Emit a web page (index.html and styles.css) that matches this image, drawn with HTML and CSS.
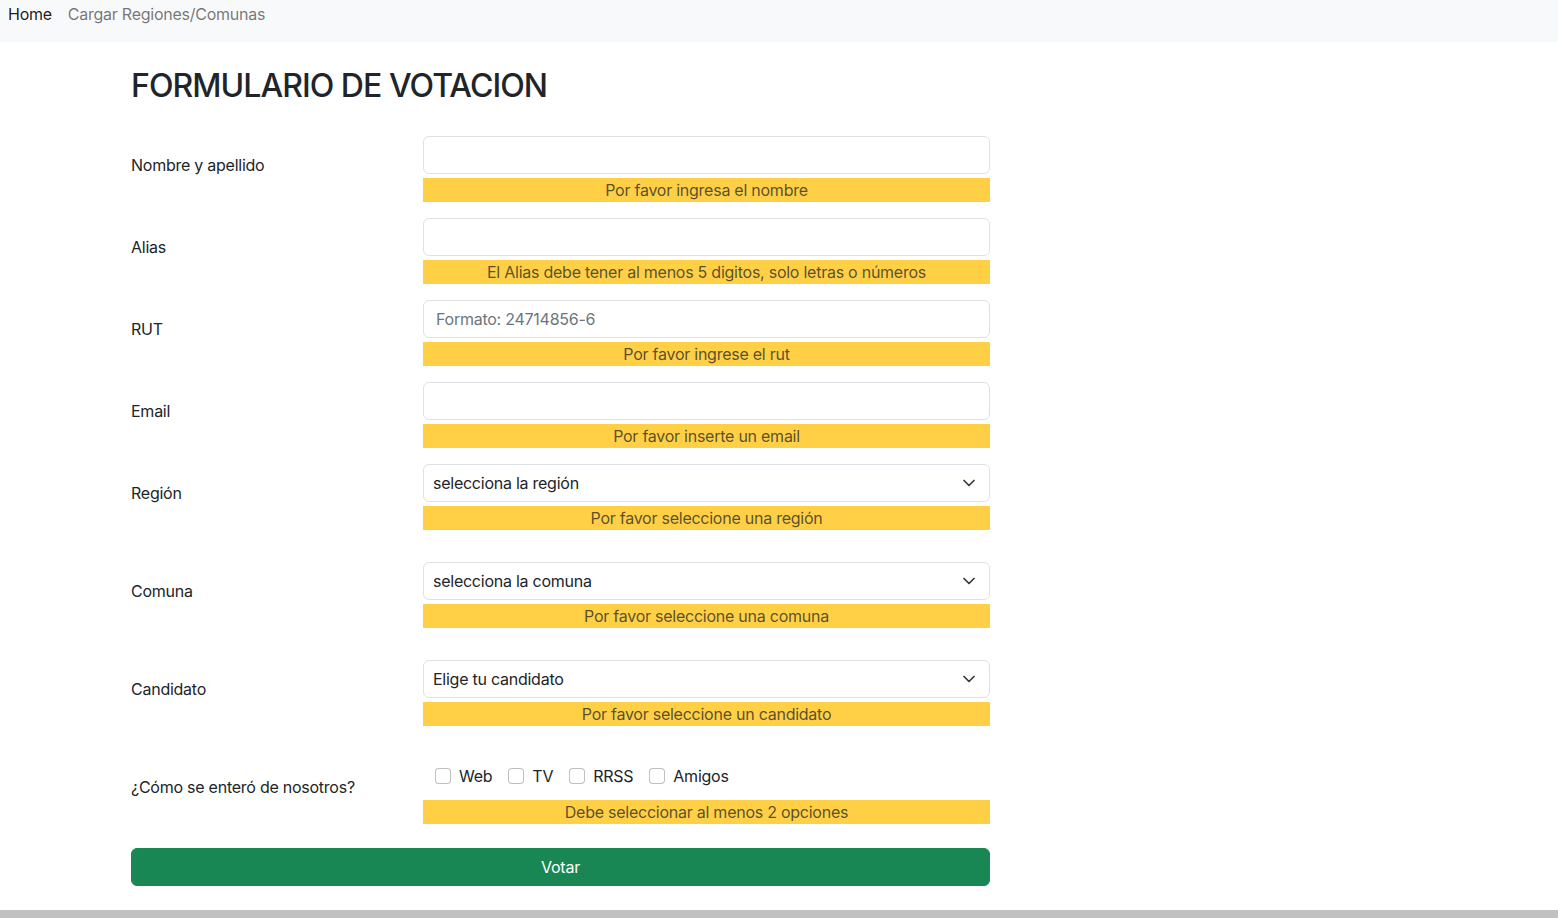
FILE: index.html
```html
<!DOCTYPE html>
<html lang="es">
<head>
<meta charset="utf-8">
<title>Formulario de votación</title>
<link rel="stylesheet" href="styles.css">
</head>
<body>
<nav class="topbar">
  <a class="nav-link active" href="#">Home</a>
  <a class="nav-link" href="#">Cargar Regiones/Comunas</a>
</nav>
<main class="container">
  <h2 class="title">FORMULARIO DE VOTACION</h2>
  <form class="vote-form">
    <div class="field-row">
      <label class="field-label">Nombre y apellido</label>
      <div class="field-control">
        <input class="form-control" type="text">
        <div class="hint">Por favor ingresa el nombre</div>
      </div>
    </div>
    <div class="field-row">
      <label class="field-label">Alias</label>
      <div class="field-control">
        <input class="form-control" type="text">
        <div class="hint">El Alias debe tener al menos 5 digitos, solo letras o números</div>
      </div>
    </div>
    <div class="field-row">
      <label class="field-label">RUT</label>
      <div class="field-control">
        <input class="form-control" type="text" placeholder="Formato: 24714856-6">
        <div class="hint">Por favor ingrese el rut</div>
      </div>
    </div>
    <div class="field-row">
      <label class="field-label">Email</label>
      <div class="field-control">
        <input class="form-control" type="email">
        <div class="hint">Por favor inserte un email</div>
      </div>
    </div>
    <div class="field-row wide">
      <label class="field-label">Región</label>
      <div class="field-control">
        <div class="select-wrap">
          <select class="form-select"><option>selecciona la región</option></select>
          <svg class="chevron" width="12" height="8" viewBox="0 0 12 8"><path d="M1 1.5 6 6.5 11 1.5" fill="none" stroke="#343a40" stroke-width="1.7" stroke-linecap="round" stroke-linejoin="round"/></svg>
        </div>
        <div class="hint">Por favor seleccione una región</div>
      </div>
    </div>
    <div class="field-row wide">
      <label class="field-label">Comuna</label>
      <div class="field-control">
        <div class="select-wrap">
          <select class="form-select"><option>selecciona la comuna</option></select>
          <svg class="chevron" width="12" height="8" viewBox="0 0 12 8"><path d="M1 1.5 6 6.5 11 1.5" fill="none" stroke="#343a40" stroke-width="1.7" stroke-linecap="round" stroke-linejoin="round"/></svg>
        </div>
        <div class="hint">Por favor seleccione una comuna</div>
      </div>
    </div>
    <div class="field-row before-checks">
      <label class="field-label">Candidato</label>
      <div class="field-control">
        <div class="select-wrap">
          <select class="form-select"><option>Elige tu candidato</option></select>
          <svg class="chevron" width="12" height="8" viewBox="0 0 12 8"><path d="M1 1.5 6 6.5 11 1.5" fill="none" stroke="#343a40" stroke-width="1.7" stroke-linecap="round" stroke-linejoin="round"/></svg>
        </div>
        <div class="hint">Por favor seleccione un candidato</div>
      </div>
    </div>
    <div class="field-row checks-row">
      <label class="field-label">¿Cómo se enteró de nosotros?</label>
      <div class="field-control">
        <div class="check-group">
          <label class="check"><input type="checkbox" class="check-input">Web</label>
          <label class="check"><input type="checkbox" class="check-input">TV</label>
          <label class="check"><input type="checkbox" class="check-input">RRSS</label>
          <label class="check"><input type="checkbox" class="check-input">Amigos</label>
        </div>
        <div class="hint">Debe seleccionar al menos 2 opciones</div>
      </div>
    </div>
    <button type="button" class="btn-submit">Votar</button>
  </form>
</main>
<div class="bottom-bar"></div>
</body>
</html>
```
FILE: styles.css
```css
* { box-sizing: border-box; }
body {
  margin: 0;
  font-family: "Inter", "Noto Sans", sans-serif;
  font-size: 16px;
  line-height: 1.5;
  letter-spacing: -0.25px;
  color: #212529;
  background: #fff;
}
.topbar {
  height: 42px;
  background: #f8f9fa;
  display: flex;
  align-items: flex-start;
  gap: 16px;
  padding: 2px 8px 0;
}
.nav-link {
  color: rgba(0,0,0,.55);
  text-decoration: none;
  line-height: 24px;
}
.nav-link.active { color: rgba(0,0,0,.9); }
.container {
  width: 1296px;
  margin: 0 auto;
}
.title {
  margin: 25px 0 31px;
  font-size: 32px;
  font-weight: 500;
  line-height: 1.2;
  letter-spacing: -0.95px;
  color: #212529;
}
.vote-form { width: 859px; }
.field-row {
  display: flex;
  align-items: center;
  margin-bottom: 16px;
}
.field-row.wide { margin-bottom: 32px; }
.field-row.before-checks { margin-bottom: 26px; }
.field-label {
  width: 292px;
  flex: none;
  margin-bottom: 9px;
}
.checks-row .field-label { margin-bottom: 2px; }
.field-control { flex: 1; }
.form-control, .form-select {
  display: block;
  width: 100%;
  height: 38px;
  padding: 6px 12px;
  font: inherit;
  letter-spacing: inherit;
  color: #212529;
  background: #fff;
  border: 1px solid #dee2e6;
  border-radius: 6px;
  outline: none;
}
.form-control::placeholder { color: #6c757d; }
.select-wrap { position: relative; }
.form-select {
  appearance: none;
  -webkit-appearance: none;
  padding-left: 9px;
  padding-right: 36px;
}
.chevron {
  position: absolute;
  right: 15px;
  top: 15px;
  pointer-events: none;
}
.hint {
  margin-top: 4px;
  height: 24px;
  line-height: 24px;
  text-align: center;
  background: #ffd045;
  color: rgba(33,37,41,.75);
}
.check-group {
  display: flex;
  align-items: center;
  gap: 16px;
  padding-left: 12px;
  height: 24px;
  margin: 12px 0;
}
.check {
  display: flex;
  align-items: center;
  gap: 8px;
}
.check-input {
  appearance: none;
  -webkit-appearance: none;
  margin: 0;
  width: 16px;
  height: 16px;
  border: 1px solid rgba(0,0,0,.25);
  border-radius: 4px;
  background: #fff;
}
.btn-submit {
  display: block;
  width: 100%;
  height: 38px;
  margin-top: 24px;
  font: inherit;
  letter-spacing: inherit;
  color: #fff;
  background: #198754;
  border: 1px solid #198754;
  border-radius: 6px;
}
.bottom-bar {
  margin-top: 24px;
  height: 8px;
  background: #c1c1c1;
}
```
